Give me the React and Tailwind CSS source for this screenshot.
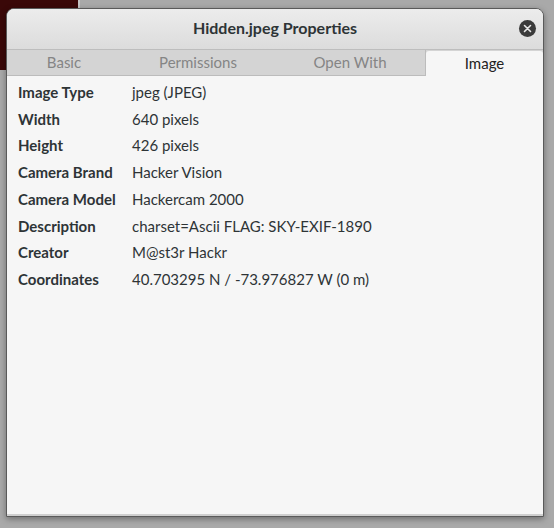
import React from "react";

const rows = [
  ["Image Type", "jpeg (JPEG)"],
  ["Width", "640 pixels"],
  ["Height", "426 pixels"],
  ["Camera Brand", "Hacker Vision"],
  ["Camera Model", "Hackercam 2000"],
  ["Description", "charset=Ascii FLAG: SKY-EXIF-1890"],
  ["Creator", "M@st3r Hackr"],
  ["Coordinates", "40.703295 N / -73.976827 W (0 m)"],
];

export default function App() {
  return (
    <div
      className="relative w-[554px] h-[528px] bg-[#a9a9a9] overflow-hidden"
      style={{ fontFamily: "Lato, 'Noto Sans', sans-serif" }}
    >
      <div className="absolute left-0 top-0 w-[78px] h-[70px] bg-[#3a0808]" />
      <div className="absolute left-[78px] top-0 w-[2px] h-[70px] bg-[#c4c4c4]" />
      <div className="absolute left-[6px] top-[8px] w-[538px] h-[509px] rounded-t-[8px] border border-[#5a5a5a] shadow-[0_2px_6px_rgba(0,0,0,0.35)] flex flex-col overflow-hidden bg-[#f6f6f6]">
        <div className="h-[41px] shrink-0 bg-gradient-to-b from-[#ececec] to-[#dcdcdc] border-b border-[#bdbdbd] flex items-center justify-center relative">
          <span className="text-[16px] font-bold text-[#2e3436] -mt-[2px]">Hidden.jpeg Properties</span>
          <div className="absolute right-[7px] top-[11px] w-[17px] h-[17px] rounded-full bg-[#3b3b3b] flex items-center justify-center">
            <svg width="9" height="9" viewBox="0 0 9 9">
              <path d="M1.5 1.5 L7.5 7.5 M7.5 1.5 L1.5 7.5" stroke="#e8e8e8" strokeWidth="1.6" strokeLinecap="round" />
            </svg>
          </div>
        </div>
        <div className="h-[26px] shrink-0 flex bg-[#d4d4d4] border-b border-[#bcbcbc] text-[15px]">
          <div className="w-[114px] flex items-center justify-center text-[#858585]">Basic</div>
          <div className="w-[154px] flex items-center justify-center text-[#858585]">Permissions</div>
          <div className="w-[151px] flex items-center justify-center text-[#858585] border-r border-[#bcbcbc]">Open With</div>
          <div className="flex-1 flex items-center justify-center text-[#222222] bg-[#f6f6f6] mt-[1px] -mb-[1px] rounded-t-[3px]">Image</div>
        </div>
        <div className="flex-1 pt-[3px] pl-[11px] text-[15px] text-[#2e3436]">
          {rows.map(([k, v]) => (
            <div key={k} className="flex h-[26.7px] items-center">
              <div className="w-[114px] font-bold">{k}</div>
              <div>{v}</div>
            </div>
          ))}
        </div>
        <div className="h-[2px] bg-[#cfcfcf] shrink-0" />
      </div>
    </div>
  );
}
